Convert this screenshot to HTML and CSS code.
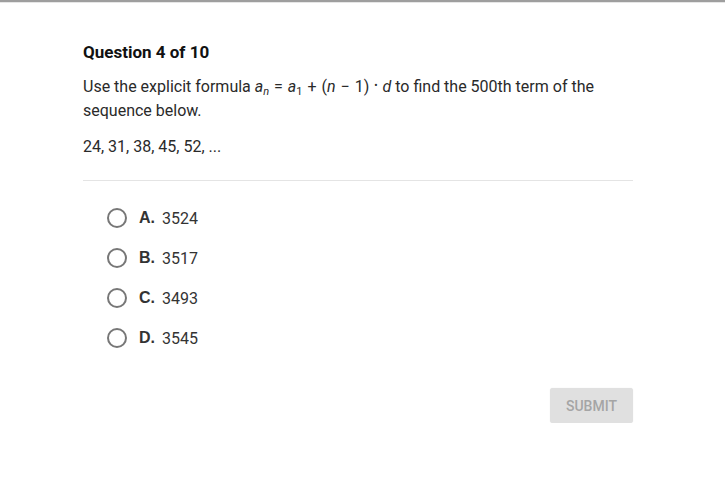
FILE: index.html
```html
<!DOCTYPE html>
<html>
<head>
<meta charset="utf-8">
<link rel="stylesheet" href="styles.css">
</head>
<body>
<div class="topbar"></div>
<main class="quiz">
  <h1 class="title">Question 4 of 10</h1>
  <p class="prompt">Use the explicit formula <span class="formula"><i>a<sub>n</sub></i> = <i>a</i><sub>1</sub> + (<i>n</i> &minus; 1) <span class="dot">&bull;</span> <i>d</i></span> to find the 500th term of the sequence below.</p>
  <p class="seq">24, 31, 38, 45, 52, ...</p>
  <hr class="divider">
  <ul class="options">
    <li class="option"><span class="radio"></span><span class="letter">A.</span><span class="val">3524</span></li>
    <li class="option"><span class="radio"></span><span class="letter">B.</span><span class="val">3517</span></li>
    <li class="option"><span class="radio"></span><span class="letter">C.</span><span class="val">3493</span></li>
    <li class="option"><span class="radio"></span><span class="letter">D.</span><span class="val">3545</span></li>
  </ul>
  <div class="actions"><button class="submit">SUBMIT</button></div>
</main>
</body>
</html>
```
FILE: styles.css
```css
html, body { margin: 0; padding: 0; background: #fff; }
body { font-family: Roboto, "Liberation Sans", sans-serif; color: #222; }
.topbar { height: 2px; background: #9e9e9e; border-bottom: 1px solid #e6e6e6; }
.quiz { width: 550px; margin-left: 83px; padding-top: 38px; }
.title { font-size: 17px; font-weight: 700; margin: 0; line-height: 22px; color: #111; }
.prompt { font-size: 16px; line-height: 22px; margin: 13px 0 0 0; color: #2a2a2a; }
.formula { word-spacing: 1px; }
.prompt sub { font-size: 11px; line-height: 0; vertical-align: -3px; }
.dot { font-size: 10px; position: relative; top: -3px; }
.seq { font-size: 16px; line-height: 22px; margin: 14px 0 0 0; color: #2a2a2a; }
.divider { border: 0; border-top: 1px solid #e4e4e4; margin: 22px 0 0 0; }
.options { list-style: none; margin: 17px 0 0 0; padding: 0 0 0 24px; }
.option { display: flex; align-items: center; height: 40px; }
.radio { width: 16px; height: 16px; border: 2px solid #777; border-radius: 50%; box-sizing: content-box; margin-right: 12px; }
.letter { font-family: "Liberation Sans", Arial, sans-serif; font-weight: 700; font-size: 16px; color: #333; width: 23px; }
.val { font-size: 16px; color: #333; }
.actions { display: flex; justify-content: flex-end; margin-top: 30px; }
.submit { width: 83px; height: 35px; border: 0; border-radius: 3px; background: #e0e0e0; color: #a5a5a5; font-family: Roboto, sans-serif; font-size: 14px; font-weight: 500; box-shadow: 0 0 1px rgba(0,0,0,0.15); }
```
